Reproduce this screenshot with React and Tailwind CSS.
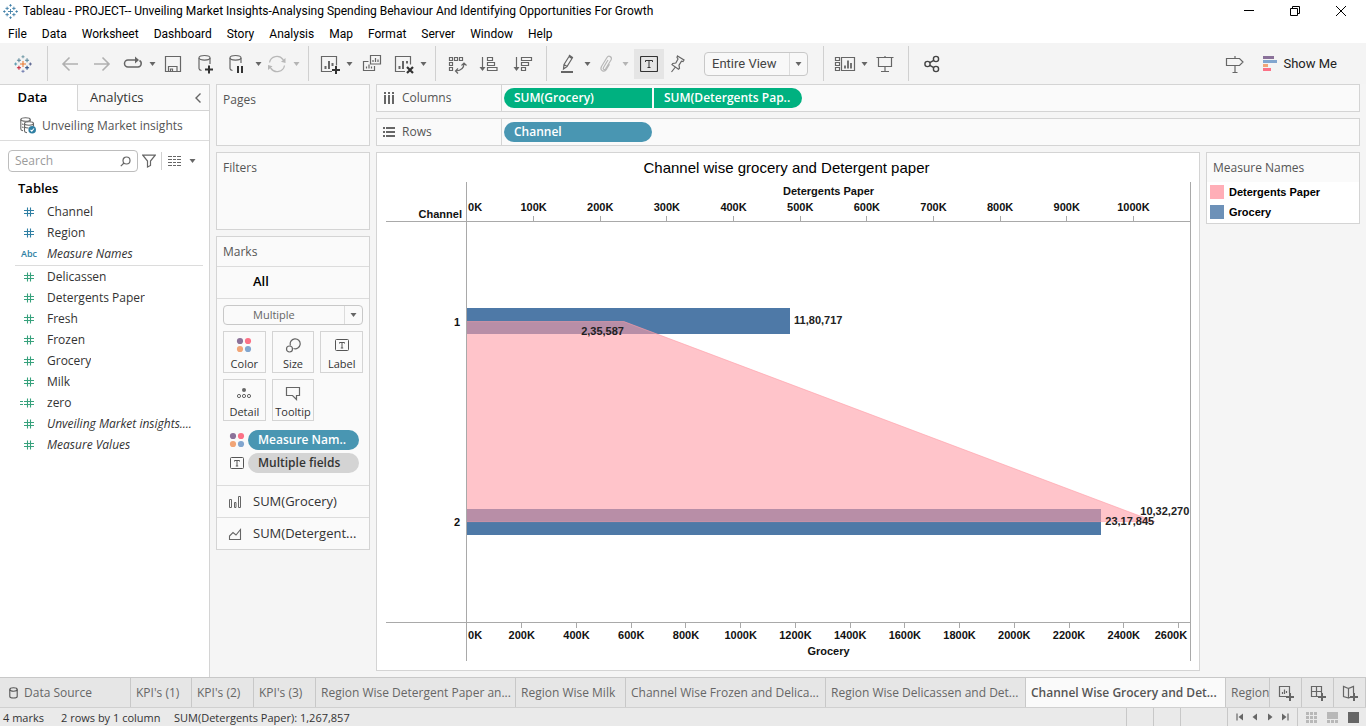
import React from "react";

const TABLEAU_CROSSES = [
  // cx, cy, arm length, colour
  [12, 12, 4, "#e8762c"],
  [6.6, 7, 2.7, "#5b879b"],
  [17.4, 7, 2.7, "#59879b"],
  [6.6, 17, 2.7, "#c72035"],
  [17.4, 17, 2.7, "#1f447e"],
  [12, 2.2, 2, "#7099a6"],
  [12, 21.8, 2, "#7b86b5"],
  [2.2, 12, 2, "#5b9bb0"],
  [21.8, 12, 2, "#5b6591"],
];

function TableauLogo({ size, mono }) {
  return (
    <svg width={size} height={size} viewBox="0 0 24 24" strokeWidth="1.4" aria-hidden="true">
      {TABLEAU_CROSSES.map(([x, y, r, c]) => (
        <path key={`${x}-${y}`} d={`M${x - r} ${y}H${x + r}M${x} ${y - r}V${y + r}`} stroke={mono || c} />
      ))}
    </svg>
  );
}

function Icon({ children, w = 20, h = 20, className = "text-[#666666]", stroke = 1.2 }) {
  return (
    <svg width={w} height={h} viewBox={`0 0 ${w} ${h}`} fill="none" stroke="currentColor" strokeWidth={stroke} className={`shrink-0 ${className}`} aria-hidden="true">
      {children}
    </svg>
  );
}

function CaretIcon({ className = "text-[#666666]" }) {
  return (
    <svg width="7" height="4" viewBox="0 0 7 4" className={className} aria-hidden="true">
      <path d="M0.5 0h6L3.5 4z" fill="currentColor" />
    </svg>
  );
}

function Tool({ label, className = "w-8", children }) {
  return (
    <button type="button" aria-label={label} className={`flex h-[30px] shrink-0 items-center justify-center ${className}`}>
      {children}
    </button>
  );
}

function Caret({ label, muted }) {
  return (
    <Tool label={label} className="w-[10px]">
      <CaretIcon className={muted ? "text-[#b4b4b4]" : "text-[#666666]"} />
    </Tool>
  );
}

function Sep() {
  return <div className="mx-[7px] h-[35px] w-px shrink-0 bg-[#d0d0d0]" />;
}

function TextMarkIcon() {
  return (
    <Icon w={18} h={16} className="text-[#333333]" stroke={1}>
      <rect x="0.5" y="0.5" width="17" height="15" rx="1" strokeWidth="1.2" />
      <path d="M5.500 6V4.500h7V6M9 4.500V11.500M7.500 11.500h3" />
    </Icon>
  );
}

function SmallTextIcon() {
  return (
    <Icon w={14} h={14} className="text-[#555555]" stroke={1}>
      <rect x="0.5" y="1.5" width="13" height="11" rx="1" />
      <path d="M4.5 5.5v-1h5v1M7 4.5v5.5M5.8 10h2.4" />
    </Icon>
  );
}

function ColorDots() {
  return (
    <svg width="16" height="16" viewBox="0 0 16 16" aria-hidden="true">
      <circle cx="4" cy="4" r="3.1" fill="#8c7299" />
      <circle cx="12" cy="4" r="3.1" fill="#fc7186" />
      <circle cx="4" cy="12" r="3.1" fill="#f1a577" />
      <circle cx="12" cy="12" r="3.1" fill="#82a6cf" />
    </svg>
  );
}

function TitleBar() {
  return (
    <header className="flex h-[22px] shrink-0 items-center bg-white pr-0.5 pl-[3px] font-['Roboto',sans-serif] text-[12px] text-black">
      <TableauLogo size={15} mono="#3a7ca5" />
      <h1 className="ml-[5px] flex-1 truncate">
        Tableau - PROJECT-- Unveiling Market Insights-Analysing Spending Behaviour And Identifying Opportunities For Growth
      </h1>
      <button type="button" aria-label="Minimize" className="flex w-[46px] justify-center">
        <Icon w={12} h={12} className="text-black" stroke={1}><path d="M1 5.500h10" /></Icon>
      </button>
      <button type="button" aria-label="Restore" className="flex w-[46px] justify-center">
        <Icon w={12} h={12} className="text-black" stroke={1}><path d="M1.500 3.500h7v7h-7zM3.500 3.500V1.500h7v7H8.500" /></Icon>
      </button>
      <button type="button" aria-label="Close" className="flex w-[46px] justify-center">
        <Icon w={12} h={12} className="text-black" stroke={1}><path d="M1 1l10 10M11 1L1 11" /></Icon>
      </button>
    </header>
  );
}

const MENUS = ["File", "Data", "Worksheet", "Dashboard", "Story", "Analysis", "Map", "Format", "Server", "Window", "Help"];

function MenuBar() {
  return (
    <nav aria-label="Menu" className="flex h-[21px] shrink-0 items-center gap-[15px] bg-white pt-0.5 pl-2 font-['Roboto',sans-serif] text-[12px] text-black">
      {MENUS.map((m) => (
        <button key={m} type="button">{m}</button>
      ))}
    </nav>
  );
}

function Toolbar() {
  return (
    <div role="toolbar" className="flex h-[41px] shrink-0 items-center bg-[#f4f4f4] pl-1.5">
      <Tool label="Start page" className="w-[34px]"><TableauLogo size={18} /></Tool>
      <Sep />
      <Tool label="Undo">
        <Icon className="text-[#b0b0b0]" stroke={1.6}><path d="M17 10H2M8.500 3.500L2 10l6.500 6.500" /></Icon>
      </Tool>
      <Tool label="Redo">
        <Icon className="text-[#b0b0b0]" stroke={1.6}><path d="M1 10h15M9.500 3.500L16 10l-6.500 6.500" /></Icon>
      </Tool>
      <Tool label="Replay" className="w-7">
        <Icon stroke={1.5}>
          <path d="M9 13h6a3.500 3.500 0 0 0 1.500-6.500M14 6H5a3.500 3.500 0 0 0 0 7h5" />
          <path d="M12 2.500L16 6l-4 3.500z" fill="currentColor" stroke="none" />
        </Icon>
      </Tool>
      <Caret label="Replay options" />
      <Tool label="Save">
        <Icon><path d="M2.500 2.500h15v15h-15zM5.500 17.500v-5h8.500v5M7.500 17.500v-2.500h2v2.500" /></Icon>
      </Tool>
      <Tool label="New data source">
        <Icon>
          <ellipse cx="9.500" cy="3.800" rx="5.500" ry="2.300" />
          <path d="M4 4v10.500c0 1 1 1.700 2.500 2M15 4v6" />
          <path d="M14 11.500v8M10 15.500h8" stroke="#333" strokeWidth="2" />
        </Icon>
      </Tool>
      <Tool label="Pause auto updates">
        <Icon>
          <ellipse cx="8.500" cy="3.800" rx="5.500" ry="2.300" />
          <path d="M3 4v10.500c0 1 1 1.700 2.500 2M14 4v5" />
          <path d="M11 12v7M15 12v7" stroke="#333" strokeWidth="2" />
        </Icon>
      </Tool>
      <Caret label="Update options" />
      <Tool label="Refresh" className="w-7">
        <Icon className="text-[#b8b8b8]" stroke={1.3}>
          <path d="M2.500 8.500a7.500 7.500 0 0 1 13.500-3l1 1.500M17.500 11.500a7.500 7.500 0 0 1-13.500 3l-1-1.500" />
          <path d="M18.500 4v5l-4.500-1.200zM1 16v-5l4.500 1.200z" fill="currentColor" stroke="none" />
        </Icon>
      </Tool>
      <Caret label="Refresh options" muted />
      <Sep />
      <Tool label="New worksheet" className="w-7">
        <Icon>
          <path d="M12 17.500H1.500v-15h15v9" />
          <path d="M5.500 15v-3M9 15V7M12.500 12V9" strokeWidth="2" />
          <path d="M16 12v8M12 16h8" stroke="#333" strokeWidth="2" />
        </Icon>
      </Tool>
      <Caret label="New worksheet options" />
      <Tool label="Duplicate" className="w-9">
        <Icon>
          <path d="M8.500 1.500h10v8.500h-10zM11 8V6M13.500 8V4M16 8V5.500" />
          <path d="M6.500 7.500h-5v9h11v-4.500M4.500 14.500v-2M7 14.500v-4M9.500 14.500v-2" />
        </Icon>
      </Tool>
      <Tool label="Clear sheet" className="w-7">
        <Icon>
          <path d="M11 17.500H1.500v-15h15v8" />
          <path d="M5.500 15v-3M9 15V7M13 9.500V7" strokeWidth="2" />
          <path d="M13 13l6 6M19 13l-6 6" stroke="#333" strokeWidth="2.200" />
        </Icon>
      </Tool>
      <Caret label="Clear options" />
      <Sep />
      <Tool label="Swap rows and columns" className="w-7">
        <Icon>
          <path d="M2.500 3.500h3v3h-3zM7.500 3.500h3v3h-3zM12.500 3.500h3v3h-3zM2.500 8.500h3v3h-3zM2.500 13.500h3v3h-3z" />
          <path d="M17 9.500c0 4-2.500 7-8 7.500M14.500 11.500l2.500-2.500 2.500 2.500M11 14.500L8.500 17l2.500 2.500" />
        </Icon>
      </Tool>
      <Tool label="Sort ascending" className="w-9">
        <Icon>
          <path d="M3.500 3v12M8.500 3.500h5v3h-5zM8.500 8.500h7v3h-7zM8.500 13.500h9.500v3H8.500z" />
          <path d="M0.500 13h6l-3 4z" fill="currentColor" stroke="none" />
        </Icon>
      </Tool>
      <Tool label="Sort descending">
        <Icon>
          <path d="M3.500 3v12M8.500 3.500h10v3h-10zM8.500 8.500h7v3h-7zM8.500 13.500h4v3h-4z" />
          <path d="M0.500 13h6l-3 4z" fill="currentColor" stroke="none" />
        </Icon>
      </Tool>
      <Sep />
      <Tool label="Highlight" className="w-7">
        <Icon>
          <path d="M6 10.500L11 2.500l3 2-5 8-3.500 2.500zM6 10.500l3 2M11 2.500l.5-1 3 2-.5 1" />
          <path d="M3 18h12" strokeWidth="2" />
        </Icon>
      </Tool>
      <Caret label="Highlight options" />
      <Tool label="Group members" className="w-7">
        <Icon className="text-[#b8b8b8]">
          <path d="M12 6l-4.500 7.500c-1 1.800 1 3 2.100 1.300L15 6c1.600-3-2.300-5.200-4-2.500L5.500 12.500c-2 3.800 2.500 6.500 5 2.800l3-5" />
        </Icon>
      </Tool>
      <Caret label="Group options" muted />
      <Tool label="Show mark labels" className="ml-1 w-[30px] bg-[#e5e5e5]"><TextMarkIcon /></Tool>
      <Tool label="Fix axes" className="w-7">
        <Icon><path d="M9.500 2l6.500 4-1 1.500-1.500-.3-2.500 4 .5 3-1 1L4 10.700l.8-1.200 3-.5 2.200-4-1-1.500zM7 13.500L3.500 18" /></Icon>
      </Tool>
      <div className="relative ml-3 mr-2 h-6 w-[104px] shrink-0">
        <select aria-label="Fit" className="block h-full w-full appearance-none rounded-sm border border-[#c8c8c8] bg-[#f8f8f8] pl-[7px] font-['Roboto',sans-serif] text-[13px] text-[#444444]">
          <option>Entire View</option>
        </select>
        <div className="pointer-events-none absolute inset-y-px right-px flex w-[18px] items-center justify-center border-l border-[#dcdcdc]">
          <CaretIcon />
        </div>
      </div>
      <Sep />
      <Tool label="Show cards" className="w-7">
        <Icon w={22}>
          <path d="M1.500 3.500h4v3h-4zM1.500 8.500h4v3h-4zM1.500 13.500h4v3h-4zM7.500 3.500h13v13h-13z" />
          <path d="M11 14.500v-3M14 14.500V6.500M17 14.500V9" strokeWidth="1.800" />
        </Icon>
      </Tool>
      <Caret label="Card options" />
      <Tool label="Presentation mode">
        <Icon><path d="M1.500 3.500h17M3.500 3.500v9h13v-9M10 2v1.500M10 12.500v5M6 17.500h8" /></Icon>
      </Tool>
      <Sep />
      <Tool label="Share">
        <Icon className="text-[#444444]" stroke={1.4}>
          <circle cx="5.500" cy="10" r="2.600" /><circle cx="14" cy="5" r="2.600" /><circle cx="14" cy="15" r="2.600" />
          <path d="M7.800 8.700l4-2.400M7.800 11.300l4 2.400" />
        </Icon>
      </Tool>
      <div className="flex-1" />
      <Tool label="Guide">
        <Icon><path d="M1.500 4.500h13l3.500 3.500-3.500 3.500h-13zM10 2v2.500M10 11.500v6.500M7.500 18.500h5" /></Icon>
      </Tool>
      <button type="button" className="ml-3 mr-[29px] flex items-center gap-[6px] font-['Roboto',sans-serif] text-[13px] text-[#222222]">
        <svg width="14" height="16" viewBox="0 0 14 16" aria-hidden="true">
          <path d="M0 0h11v3H0z" fill="#8a7199" /><path d="M0 4h14v3H0z" fill="#82a6cf" />
          <path d="M0 8h5v3H0z" fill="#f1a577" /><path d="M0 12h8v3H0z" fill="#fc7186" />
        </svg>
        Show Me
      </button>
    </div>
  );
}

const DIMENSIONS = [
  { name: "Channel", kind: "num" },
  { name: "Region", kind: "num" },
  { name: "Measure Names", kind: "abc", italic: true },
];
const MEASURES = [
  { name: "Delicassen", kind: "num" },
  { name: "Detergents Paper", kind: "num" },
  { name: "Fresh", kind: "num" },
  { name: "Frozen", kind: "num" },
  { name: "Grocery", kind: "num" },
  { name: "Milk", kind: "num" },
  { name: "zero", kind: "calc" },
  { name: "Unveiling Market insights....", kind: "num", italic: true },
  { name: "Measure Values", kind: "num", italic: true },
];

function FieldRow({ field, color }) {
  return (
    <li>
      <button type="button" className={`flex h-[21px] w-full items-center text-left ${field.italic ? "italic" : ""}`}>
        <span className={`flex w-[47px] shrink-0 justify-start ${color}`}>
          {field.kind === "abc" ? (
            <span className="pl-[21px] text-[9px] font-semibold not-italic">Abc</span>
          ) : (
            <svg width="16" height="12" viewBox="0 0 16 12" fill="none" stroke="currentColor" strokeWidth="1.100" className="ml-[19px]" aria-hidden="true">
              <path d="M5 4.500h10M5 7.500h10M8.500 1.500v9M11.500 1.500v9" />
              {field.kind === "calc" && <path d="M1 4.500h3M1 7.500h3" strokeWidth="1" />}
            </svg>
          )}
        </span>
        <span className="truncate">{field.name}</span>
      </button>
    </li>
  );
}

function DataPane() {
  return (
    <aside className="flex w-[210px] shrink-0 flex-col border-r border-t border-[#d4d4d4] bg-white text-[12px] text-[#333333]">
      <div className="flex h-[26px] shrink-0 text-[13px]">
        <button type="button" className="w-[77px] pr-3 text-center font-semibold text-black">Data</button>
        <button type="button" className="flex-1 border-b border-l border-[#d4d4d4] bg-[#fafafa] pl-3 text-left">Analytics</button>
        <button type="button" aria-label="Collapse pane" className="flex w-[22px] items-center justify-center border-b border-[#d4d4d4] bg-[#fafafa]">
          <Icon w={8} h={12} stroke={1.4}><path d="M6.500 1.500L2 6l4.500 4.500" /></Icon>
        </button>
      </div>
      <button type="button" className="flex h-[30px] shrink-0 items-center gap-1.5 border-b border-[#dcdcdc] pl-5 text-[#555555]">
        <Icon w={16} h={17} stroke={1.100}>
          <ellipse cx="5.500" cy="2.500" rx="4.700" ry="1.800" />
          <path d="M.8 2.500v9.500c0 1 1 1.500 2.200 1.700M10.200 2.500v2" />
          <ellipse cx="9" cy="6.500" rx="4.500" ry="1.700" />
          <path d="M4.500 6.500v7.500c0 1 1 1.500 2.500 1.700M13.500 6.500v3M2 7l1.500.5M2 10l1.500.5M4.500 10c1 .8 2.500 1 4 1" />
          <circle cx="12.200" cy="12.800" r="3.800" fill="#2f7fa3" stroke="none" />
          <path d="M10.500 12.800l1.300 1.300 2.200-2.600" stroke="#fff" />
        </Icon>
        Unveiling Market insights
      </button>
      <div className="mt-[9px] flex h-[22px] shrink-0 items-center pl-2">
        <div className="flex h-full w-[130px] items-center rounded-sm border border-[#bdbdbd] pl-1.5 pr-1.5">
          <input type="search" aria-label="Search fields" placeholder="Search" className="w-full min-w-0 flex-1 bg-transparent placeholder:text-[#9b9b9b] focus:outline-none" />
          <Icon w={11} h={11} stroke={1.200}><circle cx="6.500" cy="4.500" r="3.500" /><path d="M4 7L.8 10.200" /></Icon>
        </div>
        <button type="button" aria-label="Filter fields" className="ml-1">
          <Icon w={14} h={14} stroke={1.200}><path d="M.8 1.200h12.400L8.500 7v4.500L5.500 13V7z" /></Icon>
        </button>
        <div className="ml-[5px] h-[18px] w-px bg-[#d0d0d0]" />
        <button type="button" aria-label="View as" className="ml-1.5 flex items-center gap-2">
          <Icon w={13} h={10} stroke={1.200}>
            <path d="M0 .5h13M0 3.500h13M0 6.500h13M0 9.500h13" strokeDasharray="4 1 3 1" />
          </Icon>
          <CaretIcon />
        </button>
      </div>
      <h2 className="mt-1 mb-px pl-[18px] text-[13px] leading-6 font-semibold text-black">Tables</h2>
      <ul className="text-[#333333]">
        {DIMENSIONS.map((f) => <FieldRow key={f.name} field={f} color="text-[#2f7fa3]" />)}
      </ul>
      <div className="mt-px mr-[6px] ml-[15px] border-b border-[#dcdcdc]" />
      <ul>
        {MEASURES.map((f) => <FieldRow key={f.name} field={f} color="text-[#37a17c]" />)}
      </ul>
    </aside>
  );
}

function MarkButton({ label, children }) {
  return (
    <button type="button" className="flex h-[42px] flex-col items-center justify-between border border-[#d4d4d4] bg-[#fafafa] pt-[5px] text-[11px] leading-4 text-[#333333]">
      <span className="flex h-4 items-center">{children}</span>
      {label}
    </button>
  );
}

function MarksColumn() {
  return (
    <div className="flex w-[154px] shrink-0 flex-col gap-1.5 text-[12px] text-[#555555]">
      <section className="h-[62px] border border-[#d4d4d4] bg-[#fafafa] px-1.5 pt-1.5"><h2>Pages</h2></section>
      <section className="h-[78px] border border-[#d4d4d4] bg-[#fafafa] px-1.5 pt-1.5"><h2>Filters</h2></section>
      <section className="border border-[#d4d4d4] bg-[#fafafa]">
        <h2 className="h-[30px] border-b border-[#dcdcdc] px-1.5 leading-[30px]">Marks</h2>
        <button type="button" className="block h-8 w-full border-b border-[#dcdcdc] pb-0.5 pl-9 text-left text-[13px] font-semibold text-black">All</button>
        <div className="px-1.5 pt-1.5 pb-3">
          <div className="relative h-5">
            <select aria-label="Mark type" className="block h-full w-full appearance-none rounded-sm border border-[#c8c8c8] bg-[#fafafa] pl-[29px] text-[11px] text-[#666666]">
              <option>Multiple</option>
            </select>
            <div className="pointer-events-none absolute inset-y-px right-px flex w-[18px] items-center justify-center border-l border-[#dcdcdc]"><CaretIcon /></div>
          </div>
          <div className="mt-1.5 grid grid-cols-3 gap-1.5">
            <MarkButton label="Color"><ColorDots /></MarkButton>
            <MarkButton label="Size">
              <Icon w={16} h={16}><path d="M5.500 8.500a5 5 0 1 1 3 3" /><circle cx="4.500" cy="12" r="3" /></Icon>
            </MarkButton>
            <MarkButton label="Label"><SmallTextIcon /></MarkButton>
            <MarkButton label="Detail">
              <Icon w={16} h={16} stroke={1}>
                <circle cx="8" cy="5" r="2" fill="currentColor" stroke="none" />
                <circle cx="3" cy="11" r="1.600" /><circle cx="8" cy="11" r="1.600" /><circle cx="13" cy="11" r="1.600" />
              </Icon>
            </MarkButton>
            <MarkButton label="Tooltip">
              <Icon w={16} h={16}><path d="M1.500 2.500h13v8h-3v4l-4-4h-6z" /></Icon>
            </MarkButton>
          </div>
          <div className="mt-[9px] flex flex-col gap-[3px] pr-1 pl-1.5 font-semibold">
            <div className="flex items-center gap-[3px]">
              <ColorDots />
              <button type="button" className="h-5 flex-1 rounded-full bg-[#4996b2] pl-2.5 text-left text-white">Measure Nam..</button>
            </div>
            <div className="flex items-center gap-[3px]">
              <span className="flex w-4 justify-center"><SmallTextIcon /></span>
              <button type="button" className="h-5 flex-1 rounded-full bg-[#d4d4d4] pl-2.5 text-left text-[#333333]">Multiple fields</button>
            </div>
          </div>
        </div>
        <button type="button" className="flex h-8 w-full items-center gap-[11px] border-t border-[#dcdcdc] pl-[11px] text-[13px] text-[#333333]">
          <Icon w={14} h={14} stroke={1}><path d="M1.500 4.500h2v8h-2zM6.500 7.500h1.500v5h-1.500zM10.500 1.500h2v11h-2z" /></Icon>
          SUM(Grocery)
        </button>
        <button type="button" className="flex h-8 w-full items-center gap-[11px] border-t border-[#dcdcdc] pl-[11px] text-[13px] text-[#333333]">
          <Icon w={14} h={14} stroke={1.100}><path d="M1.500 12.500V9l3.500-3.500 3 2.500 4.500-5.500v10z" /></Icon>
          SUM(Detergent...
        </button>
      </section>
    </div>
  );
}

function Shelf({ label, icon, children }) {
  return (
    <div className="flex h-7 shrink-0 border border-[#d4d4d4] bg-[#fafafa] text-[12px]">
      <div className="flex w-[125px] items-center gap-[7px] border-r border-[#d4d4d4] pl-1.5 text-[#555555]">
        {icon}
        {label}
      </div>
      <div className="flex items-center gap-0.5 pl-0.5 font-semibold text-white">{children}</div>
    </div>
  );
}

const TOP_MAX = 1085;
const BOTTOM_MAX = 2642;
const pct = (v, max) => `${(v / max) * 100}%`;

function Axis({ step, count, max, title, top }) {
  const ticks = Array.from({ length: count }, (_, i) => i * step);
  const tickY = top ? [34, 40] : [0, 5];
  return (
    <svg className="block h-full w-full overflow-visible" fontSize="11" fontWeight="bold" fill="#111" aria-label={title}>
      {ticks.map((t, i) => {
        const clampEnd = !top && i === count - 1;
        return (
          <g key={t}>
            {i > 0 && <line x1={pct(t, max)} x2={pct(t, max)} y1={tickY[0]} y2={tickY[1]} stroke="#a9a9a9" shapeRendering="crispEdges" />}
            <text
              x={clampEnd ? "99.6%" : i === 0 ? 1 : pct(t, max)}
              y={top ? 29 : 16}
              textAnchor={clampEnd ? "end" : i === 0 ? "start" : "middle"}
            >
              {t}K
            </text>
          </g>
        );
      })}
      <text x="50%" y={top ? 13 : 32} textAnchor="middle">{title}</text>
    </svg>
  );
}

function Plot() {
  const x1 = (235.587 / TOP_MAX) * 100;
  const x2 = (1032.27 / TOP_MAX) * 100;
  return (
    <svg className="block h-full w-full" fontSize="11" fontWeight="bold" fill="#222" role="img" aria-label="Grocery bars with Detergents Paper area">
      <rect x="0" y="21.500%" width={pct(1180.717, BOTTOM_MAX)} height="6.500%" fill="#4e79a7" shapeRendering="crispEdges" />
      <rect x="0" y="71.750%" width={pct(2317.845, BOTTOM_MAX)} height="6.500%" fill="#4e79a7" shapeRendering="crispEdges" />
      <svg x="0" y="0" width="100%" height="100%" viewBox="0 0 100 100" preserveAspectRatio="none">
        <path d={`M0 24.900H${x1}L${x2} 74.900H0z`} fill="#ff9da7" fillOpacity="0.600" />
        <path d={`M0 24.900H${x1}L${x2} 74.900H0`} fill="none" stroke="#ff9da7" strokeOpacity="0.600" vectorEffect="non-scaling-stroke" />
      </svg>
      <text x={pct(1180.717, BOTTOM_MAX)} dx="4" y="25.500%">11,80,717</text>
      <text x={pct(235.587, TOP_MAX)} y="28.300%" textAnchor="end">2,35,587</text>
      <text x={pct(2317.845, BOTTOM_MAX)} dx="4" y="75.800%">23,17,845</text>
      <text x="99.900%" y="73.300%" textAnchor="end">10,32,270</text>
    </svg>
  );
}

function ChartSheet() {
  return (
    <section className="flex min-w-0 flex-1 flex-col border border-[#d4d4d4] bg-white pt-1 pr-2 pb-[9px] pl-[9px] font-['Liberation_Sans',Arial,sans-serif] text-[11px] text-black">
      <h2 className="h-[25px] pr-1 text-center text-[15px] leading-[22px]">Channel wise grocery and Detergent paper</h2>
      <div className="flex min-h-0 flex-1 font-bold text-[#111111]">
        <div className="flex w-20 shrink-0 flex-col text-right">
          <div className="flex h-10 items-end justify-end border-b border-[#a9a9a9] pr-1 leading-[14px]">Channel</div>
          <div className="flex flex-1 flex-col justify-around border-b border-[#a9a9a9] pr-1.5">
            <span>1</span>
            <span>2</span>
          </div>
          <div className="h-[38px]" />
        </div>
        <div className="flex min-w-0 flex-1 flex-col border-x border-[#a9a9a9]">
          <div className="h-10 border-b border-[#a9a9a9]"><Axis top step={100} count={11} max={TOP_MAX} title="Detergents Paper" /></div>
          <div className="min-h-0 flex-1 border-b border-[#a9a9a9]"><Plot /></div>
          <div className="h-[38px]"><Axis step={200} count={14} max={BOTTOM_MAX} title="Grocery" /></div>
        </div>
      </div>
    </section>
  );
}

function Legend() {
  return (
    <aside className="w-[154px] shrink-0 self-start border border-[#d4d4d4] bg-white">
      <h2 className="bg-[#fafafa] px-1.5 text-[12px] leading-[29px] text-[#555555]">Measure Names</h2>
      <ul className="pb-px pl-[3px] font-['Liberation_Sans',Arial,sans-serif] text-[11px] font-bold text-black">
        <li className="flex h-5 items-center gap-[5px]"><span className="size-3.5 bg-[#ffaeb7]" />Detergents Paper</li>
        <li className="flex h-5 items-center gap-[5px]"><span className="size-3.5 bg-[#6d91b8]" />Grocery</li>
      </ul>
    </aside>
  );
}

const SHEETS = [
  { name: "KPI's (1)", w: "w-[61px]" },
  { name: "KPI's (2)", w: "w-[62px]" },
  { name: "KPI's (3)", w: "w-[62px]" },
  { name: "Region Wise Detergent Paper an...", w: "w-[200px]" },
  { name: "Region Wise Milk", w: "w-[110px]" },
  { name: "Channel Wise Frozen and Delica...", w: "w-[200px]" },
  { name: "Region Wise Delicassen and Det...", w: "w-[200px]" },
  { name: "Channel Wise Grocery and Det...", w: "w-[200px]", active: true },
];

function SheetTabs() {
  return (
    <nav aria-label="Sheets" className="flex h-[30px] shrink-0 border-t border-[#c8c8c8] bg-[#e6e6e6] text-[12px] text-[#666666]">
      <button type="button" className="flex w-[131px] shrink-0 items-center gap-1.5 border-r border-[#c8c8c8] pl-[9px]">
        <Icon w={9} h={12} className="text-[#555555]" stroke={1.100}>
          <ellipse cx="4.500" cy="2.500" rx="3.700" ry="1.700" /><path d="M.8 2.500v7c0 2 7.400 2 7.400 0v-7" />
        </Icon>
        Data Source
      </button>
      {SHEETS.map((s) => (
        <button
          key={s.name}
          type="button"
          className={`shrink-0 overflow-hidden border-r border-[#c8c8c8] pl-[5px] text-left whitespace-nowrap ${s.w} ${s.active ? "bg-[#fafafa] font-semibold text-[#555555]" : ""}`}
        >
          {s.name}
        </button>
      ))}
      <button type="button" className="min-w-0 flex-1 overflow-hidden border-r border-[#c8c8c8] pl-[5px] text-left whitespace-nowrap">Region</button>
      <button type="button" aria-label="New worksheet" className="flex w-8 shrink-0 items-center justify-center border-r border-[#c8c8c8]">
        <Icon w={16} h={16}><path d="M8 11.500H1.500v-10h10V8M4.500 9V7M6.500 9V4.500M8.500 8V6" /><path d="M12 8v8M8 12h8" strokeWidth="2" /></Icon>
      </button>
      <button type="button" aria-label="New dashboard" className="flex w-8 shrink-0 items-center justify-center border-r border-[#c8c8c8]">
        <Icon w={16} h={16}><path d="M8 11.500H1.500v-10h10V8M6.500 1.500v10M1.500 6.500h10" /><path d="M12 8v8M8 12h8" strokeWidth="2" /></Icon>
      </button>
      <button type="button" aria-label="New story" className="flex w-8 shrink-0 items-center justify-center border-r border-[#c8c8c8]">
        <Icon w={16} h={16}><path d="M6.500 3.500L1.500 1.500v10l5 1.500V3.500l5-2V8M6.500 13l2-.8" /><path d="M12 8v8M8 12h8" strokeWidth="2" /></Icon>
      </button>
    </nav>
  );
}

function StatusBar() {
  return (
    <footer className="flex h-[19px] shrink-0 items-stretch border-t border-[#d0d0d0] bg-[#eaeaea] pl-[3px] text-[11px] leading-[19px] text-[#333333]">
      <span className="w-[58px]">4 marks</span>
      <span className="w-[113px]">2 rows by 1 column</span>
      <span>SUM(Detergents Paper): 1,267,857</span>
      <div className="flex-1" />
      <div className="w-[27px] border-l border-[#c8c8c8]" />
      <div className="w-[27px] border-l border-[#c8c8c8]" />
      <div className="w-[47px] border-l border-[#c8c8c8]" />
      <div className="flex w-[71px] items-center justify-around border-x border-[#c8c8c8] px-1 text-[#555555]">
        <button type="button" aria-label="First sheet"><Icon w={8} h={8}><path d="M1 0.500v7" stroke="currentColor" /><path d="M7 .5v7L2.500 4z" fill="currentColor" stroke="none" /></Icon></button>
        <button type="button" aria-label="Previous sheet"><Icon w={8} h={8}><path d="M6 .5v7L1.500 4z" fill="currentColor" stroke="none" /></Icon></button>
        <button type="button" aria-label="Next sheet"><Icon w={8} h={8}><path d="M2 .5v7L6.500 4z" fill="currentColor" stroke="none" /></Icon></button>
        <button type="button" aria-label="Last sheet"><Icon w={8} h={8}><path d="M7 .5v7" /><path d="M1 .5v7L5.500 4z" fill="currentColor" stroke="none" /></Icon></button>
      </div>
      <div className="flex w-[68px] items-center gap-2.5 pl-2">
        <button type="button" aria-label="Sheet sorter">
          <svg width="11" height="11" viewBox="0 0 11 11" fill="#b8b8b8" aria-hidden="true">
            {[0, 4, 8].map((y) => [0, 4, 8].map((x) => <rect key={`${x}${y}`} x={x} y={y} width="3" height="3" />))}
          </svg>
        </button>
        <button type="button" aria-label="Filmstrip">
          <svg width="11" height="11" viewBox="0 0 11 11" fill="#b8b8b8" aria-hidden="true">
            <path d="M0 0h11v7H0zM0 8h3v3H0zM4 8h3v3H4zM8 8h3v3H8z" />
          </svg>
        </button>
        <button type="button" aria-label="Tabs view">
          <svg width="11" height="11" viewBox="0 0 11 11" aria-hidden="true"><path d="M0 0h11v11H0z" fill="#666" /></svg>
        </button>
      </div>
    </footer>
  );
}

export default function App() {
  return (
    <div className="flex h-screen flex-col overflow-hidden bg-[#f5f5f5] font-['Open_Sans',sans-serif]">
      <TitleBar />
      <MenuBar />
      <Toolbar />
      <div className="flex min-h-0 flex-1 bg-[#f5f5f5]">
        <DataPane />
        <main className="flex min-w-0 flex-1 gap-1.5 pr-1.5 pb-1.5 pl-1.5">
          <MarksColumn />
          <div className="flex min-w-0 flex-1 flex-col gap-1.5">
            <Shelf
              label="Columns"
              icon={<Icon w={12} h={12} stroke={2}><path d="M2 3v9M6 3v9M10 3v9M2 0v2M6 0v2M10 0v2" /></Icon>}
            >
              <button type="button" className="h-5 w-[148px] rounded-l-full bg-[#00b180] pl-2.5 text-left">SUM(Grocery)</button>
              <button type="button" className="h-5 w-[148px] rounded-r-full bg-[#00b180] pl-2.5 text-left">SUM(Detergents Pap..</button>
            </Shelf>
            <Shelf
              label="Rows"
              icon={<Icon w={12} h={12} stroke={2}><path d="M3 2H12M3 6H12M3 10H12M0 2h2M0 6h2M0 10h2" /></Icon>}
            >
              <button type="button" className="h-5 w-[148px] rounded-full bg-[#4996b2] pl-2.5 text-left">Channel</button>
            </Shelf>
            <div className="flex min-h-0 flex-1 gap-1.5">
              <ChartSheet />
              <Legend />
            </div>
          </div>
        </main>
      </div>
      <SheetTabs />
      <StatusBar />
    </div>
  );
}
